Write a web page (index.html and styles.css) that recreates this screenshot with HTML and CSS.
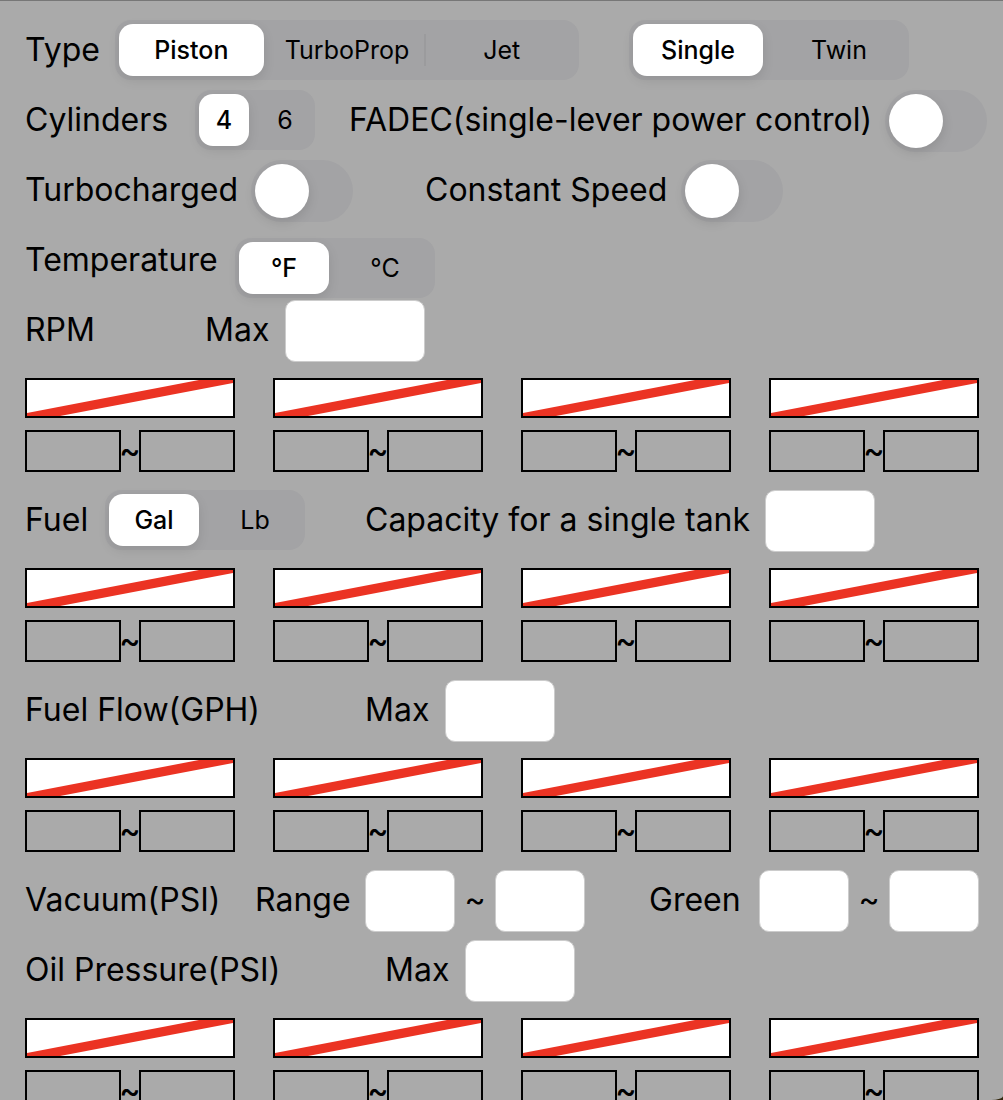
FILE: index.html
```html
<!DOCTYPE html>
<html lang="en">
<head>
<meta charset="utf-8">
<meta name="viewport" content="width=device-width, initial-scale=1">
<title>Engine settings</title>
<link rel="stylesheet" href="styles.css">
</head>
<body>
<form class="panel">
  <div class="row row-type">
    <span class="caption" id="type">Type</span>
    <div class="segments" role="radiogroup" aria-labelledby="type">
      <label class="segment"><input type="radio" name="type" checked><span>Piston</span></label>
      <label class="segment"><input type="radio" name="type"><span>TurboProp</span></label>
      <label class="segment divided"><input type="radio" name="type"><span>Jet</span></label>
    </div>
    <div class="segments" role="radiogroup" aria-label="Engine count">
      <label class="segment"><input type="radio" name="count" checked><span>Single</span></label>
      <label class="segment"><input type="radio" name="count"><span>Twin</span></label>
    </div>
  </div>

  <div class="row row-cylinders">
    <span class="caption" id="cylinders">Cylinders</span>
    <div class="segments" role="radiogroup" aria-labelledby="cylinders">
      <label class="segment"><input type="radio" name="cylinders" checked><span>4</span></label>
      <label class="segment"><input type="radio" name="cylinders"><span>6</span></label>
    </div>
    <label class="caption" for="fadec">FADEC(single-lever power control)</label>
    <input class="switch" type="checkbox" role="switch" id="fadec">
  </div>

  <div class="row row-turbo">
    <label class="caption" for="turbo">Turbocharged</label>
    <input class="switch" type="checkbox" role="switch" id="turbo">
    <label class="caption" for="constant">Constant Speed</label>
    <input class="switch" type="checkbox" role="switch" id="constant">
  </div>

  <div class="row row-temperature">
    <span class="caption" id="temperature">Temperature</span>
    <div class="segments lowered" role="radiogroup" aria-labelledby="temperature">
      <label class="segment"><input type="radio" name="temperature" checked><span>°F</span></label>
      <label class="segment"><input type="radio" name="temperature"><span>°C</span></label>
    </div>
  </div>

  <div class="row row-rpm">
    <span class="caption">RPM</span>
    <label class="caption" for="rpm-max">Max</label>
    <input class="field" type="text" id="rpm-max">
  </div>
  <div class="gauges">
    <div class="gauge">
      <button class="swatch" type="button" aria-label="RPM color 1"><svg viewBox="0 0 206 36" preserveAspectRatio="none"><path d="M0 33L172 0H206V3L33 36H0Z"/></svg></button>
      <div class="range"><input type="text" aria-label="RPM 1 from"><span>~</span><input type="text" aria-label="RPM 1 to"></div>
    </div>
    <div class="gauge">
      <button class="swatch" type="button" aria-label="RPM color 2"><svg viewBox="0 0 206 36" preserveAspectRatio="none"><path d="M0 33L172 0H206V3L33 36H0Z"/></svg></button>
      <div class="range"><input type="text" aria-label="RPM 2 from"><span>~</span><input type="text" aria-label="RPM 2 to"></div>
    </div>
    <div class="gauge">
      <button class="swatch" type="button" aria-label="RPM color 3"><svg viewBox="0 0 206 36" preserveAspectRatio="none"><path d="M0 33L172 0H206V3L33 36H0Z"/></svg></button>
      <div class="range"><input type="text" aria-label="RPM 3 from"><span>~</span><input type="text" aria-label="RPM 3 to"></div>
    </div>
    <div class="gauge">
      <button class="swatch" type="button" aria-label="RPM color 4"><svg viewBox="0 0 206 36" preserveAspectRatio="none"><path d="M0 33L172 0H206V3L33 36H0Z"/></svg></button>
      <div class="range"><input type="text" aria-label="RPM 4 from"><span>~</span><input type="text" aria-label="RPM 4 to"></div>
    </div>
  </div>

  <div class="row row-fuel">
    <span class="caption" id="fuel">Fuel</span>
    <div class="segments" role="radiogroup" aria-labelledby="fuel">
      <label class="segment"><input type="radio" name="fuel" checked><span>Gal</span></label>
      <label class="segment"><input type="radio" name="fuel"><span>Lb</span></label>
    </div>
    <label class="caption" for="capacity">Capacity for a single tank</label>
    <input class="field" type="text" id="capacity">
  </div>
  <div class="gauges">
    <div class="gauge">
      <button class="swatch" type="button" aria-label="Fuel color 1"><svg viewBox="0 0 206 36" preserveAspectRatio="none"><path d="M0 33L172 0H206V3L33 36H0Z"/></svg></button>
      <div class="range"><input type="text" aria-label="Fuel 1 from"><span>~</span><input type="text" aria-label="Fuel 1 to"></div>
    </div>
    <div class="gauge">
      <button class="swatch" type="button" aria-label="Fuel color 2"><svg viewBox="0 0 206 36" preserveAspectRatio="none"><path d="M0 33L172 0H206V3L33 36H0Z"/></svg></button>
      <div class="range"><input type="text" aria-label="Fuel 2 from"><span>~</span><input type="text" aria-label="Fuel 2 to"></div>
    </div>
    <div class="gauge">
      <button class="swatch" type="button" aria-label="Fuel color 3"><svg viewBox="0 0 206 36" preserveAspectRatio="none"><path d="M0 33L172 0H206V3L33 36H0Z"/></svg></button>
      <div class="range"><input type="text" aria-label="Fuel 3 from"><span>~</span><input type="text" aria-label="Fuel 3 to"></div>
    </div>
    <div class="gauge">
      <button class="swatch" type="button" aria-label="Fuel color 4"><svg viewBox="0 0 206 36" preserveAspectRatio="none"><path d="M0 33L172 0H206V3L33 36H0Z"/></svg></button>
      <div class="range"><input type="text" aria-label="Fuel 4 from"><span>~</span><input type="text" aria-label="Fuel 4 to"></div>
    </div>
  </div>

  <div class="row row-flow">
    <span class="caption">Fuel Flow(GPH)</span>
    <label class="caption" for="flow-max">Max</label>
    <input class="field" type="text" id="flow-max">
  </div>
  <div class="gauges">
    <div class="gauge">
      <button class="swatch" type="button" aria-label="Fuel flow color 1"><svg viewBox="0 0 206 36" preserveAspectRatio="none"><path d="M0 33L172 0H206V3L33 36H0Z"/></svg></button>
      <div class="range"><input type="text" aria-label="Fuel flow 1 from"><span>~</span><input type="text" aria-label="Fuel flow 1 to"></div>
    </div>
    <div class="gauge">
      <button class="swatch" type="button" aria-label="Fuel flow color 2"><svg viewBox="0 0 206 36" preserveAspectRatio="none"><path d="M0 33L172 0H206V3L33 36H0Z"/></svg></button>
      <div class="range"><input type="text" aria-label="Fuel flow 2 from"><span>~</span><input type="text" aria-label="Fuel flow 2 to"></div>
    </div>
    <div class="gauge">
      <button class="swatch" type="button" aria-label="Fuel flow color 3"><svg viewBox="0 0 206 36" preserveAspectRatio="none"><path d="M0 33L172 0H206V3L33 36H0Z"/></svg></button>
      <div class="range"><input type="text" aria-label="Fuel flow 3 from"><span>~</span><input type="text" aria-label="Fuel flow 3 to"></div>
    </div>
    <div class="gauge">
      <button class="swatch" type="button" aria-label="Fuel flow color 4"><svg viewBox="0 0 206 36" preserveAspectRatio="none"><path d="M0 33L172 0H206V3L33 36H0Z"/></svg></button>
      <div class="range"><input type="text" aria-label="Fuel flow 4 from"><span>~</span><input type="text" aria-label="Fuel flow 4 to"></div>
    </div>
  </div>

  <div class="row row-vacuum">
    <span class="caption">Vacuum(PSI)</span>
    <label class="caption" for="vacuum-from">Range</label>
    <input class="field" type="text" id="vacuum-from">
    <span class="tilde">~</span>
    <input class="field" type="text" aria-label="Vacuum range to">
    <label class="caption green" for="green-from">Green</label>
    <input class="field" type="text" id="green-from">
    <span class="tilde">~</span>
    <input class="field" type="text" aria-label="Vacuum green to">
  </div>

  <div class="row row-oil">
    <span class="caption">Oil Pressure(PSI)</span>
    <label class="caption" for="oil-max">Max</label>
    <input class="field" type="text" id="oil-max">
  </div>
  <div class="gauges">
    <div class="gauge">
      <button class="swatch" type="button" aria-label="Oil pressure color 1"><svg viewBox="0 0 206 36" preserveAspectRatio="none"><path d="M0 33L172 0H206V3L33 36H0Z"/></svg></button>
      <div class="range"><input type="text" aria-label="Oil pressure 1 from"><span>~</span><input type="text" aria-label="Oil pressure 1 to"></div>
    </div>
    <div class="gauge">
      <button class="swatch" type="button" aria-label="Oil pressure color 2"><svg viewBox="0 0 206 36" preserveAspectRatio="none"><path d="M0 33L172 0H206V3L33 36H0Z"/></svg></button>
      <div class="range"><input type="text" aria-label="Oil pressure 2 from"><span>~</span><input type="text" aria-label="Oil pressure 2 to"></div>
    </div>
    <div class="gauge">
      <button class="swatch" type="button" aria-label="Oil pressure color 3"><svg viewBox="0 0 206 36" preserveAspectRatio="none"><path d="M0 33L172 0H206V3L33 36H0Z"/></svg></button>
      <div class="range"><input type="text" aria-label="Oil pressure 3 from"><span>~</span><input type="text" aria-label="Oil pressure 3 to"></div>
    </div>
    <div class="gauge">
      <button class="swatch" type="button" aria-label="Oil pressure color 4"><svg viewBox="0 0 206 36" preserveAspectRatio="none"><path d="M0 33L172 0H206V3L33 36H0Z"/></svg></button>
      <div class="range"><input type="text" aria-label="Oil pressure 4 from"><span>~</span><input type="text" aria-label="Oil pressure 4 to"></div>
    </div>
  </div>
</form>
</body>
</html>
```
FILE: styles.css
```css
* {
  box-sizing: border-box;
}

html {
  height: 100%;
  overflow: hidden;
}

body {
  height: 100%;
  margin: 0;
  background: #33280f;
  color: #000;
  font-family: Inter, "Liberation Sans", sans-serif;
  font-size: 32px;
}

/* The panel fills the window and scrolls its own content. */
.panel {
  height: 100%;
  padding: 19px 24px 0 25px;
  overflow: auto;
  scrollbar-width: none;
  background: #aaa;
  border-top: 1px solid #777;
  border-bottom-right-radius: 12px 4px;
}

.row {
  display: grid;
  align-items: start;
  min-height: 70px;
}

.row-type { grid-template-columns: 90px 464px 50px 280px; }
.row-type .segments:last-child { grid-column: 4; }
.row-cylinders { grid-template-columns: 170px 120px 570px 102px; }
.row-cylinders label.caption { padding-left: 34px; }
.row-turbo { grid-template-columns: 226px 174px 256px 102px; }
.row-temperature { grid-template-columns: 210px 200px; }
.row-rpm { grid-template-columns: 180px 80px 140px; }
.row-fuel { grid-template-columns: 80px 200px 460px 110px; }
.row-fuel label.caption { padding-left: 60px; }
.row-flow { grid-template-columns: 340px 80px 110px; }
.row-vacuum { grid-template-columns: 230px 110px 90px 40px 90px 174px 90px 40px 90px; }
.row-vacuum .green { padding-left: 64px; }
.row-oil { grid-template-columns: 360px 80px 110px; }

.caption {
  line-height: 60px;
  white-space: nowrap;
}

.tilde {
  line-height: 60px;
  text-align: center;
}

/* Segmented control */
.segments {
  display: grid;
  grid-auto-flow: column;
  grid-auto-columns: 1fr;
  height: 60px;
  border-radius: 16px;
  background: #a3a3a5;
}

.lowered {
  margin-top: 8px;
}

.segment {
  display: grid;
  font-size: 25px;
}

.segment input {
  grid-area: 1 / 1;
  appearance: none;
  margin: 0;
}

.segment span {
  grid-area: 1 / 1;
  line-height: 60px;
  text-align: center;
}

.segment input:checked + span {
  margin: 4px 6px 4px 4px;
  border-radius: 14px;
  background: #fff;
  box-shadow: 0 4px 12px rgba(0, 0, 0, .1);
  font-weight: 500;
  line-height: 52px;
}

.divided {
  background: linear-gradient(#9b9b9d, #9b9b9d) left center / 2px 32px no-repeat;
}

/* Switch */
.switch {
  appearance: none;
  width: 102px;
  height: 62px;
  margin: 0;
  padding: 4px;
  border-radius: 31px;
  background: #a3a3a5;
}

.switch::before {
  content: "";
  display: block;
  width: 54px;
  height: 54px;
  border-radius: 50%;
  background: #fff;
  box-shadow: 0 4px 12px rgba(0, 0, 0, .12);
}

.switch:checked::before {
  margin-left: auto;
}

.field {
  width: 100%;
  height: 62px;
  padding: 0 12px;
  border: 1px solid #ccc;
  border-radius: 10px;
  background: #fff;
  font: inherit;
}

/* Four color ranges under each measured value */
.gauges {
  display: grid;
  grid-template-columns: repeat(4, 1fr);
  gap: 38px;
  padding: 8px 0 18px;
}

.gauge {
  display: grid;
  gap: 12px;
  min-width: 0;
}

.swatch {
  width: 100%;
  height: 40px;
  padding: 0;
  border: 2px solid #000;
  border-radius: 0;
  background: #fff;
}

.swatch svg {
  display: block;
  width: 100%;
  height: 100%;
  fill: #eb3323;
}

.range {
  display: grid;
  grid-template-columns: 1fr 18px 1fr;
  height: 42px;
}

.range input {
  min-width: 0;
  width: 100%;
  padding: 0 6px;
  border: 2px solid #000;
  border-radius: 0;
  background: transparent;
  font: inherit;
  font-size: 25px;
}

.range span {
  display: flex;
  justify-content: center;
  font-size: 32px;
  font-weight: 500;
  line-height: 42px;
}
```
